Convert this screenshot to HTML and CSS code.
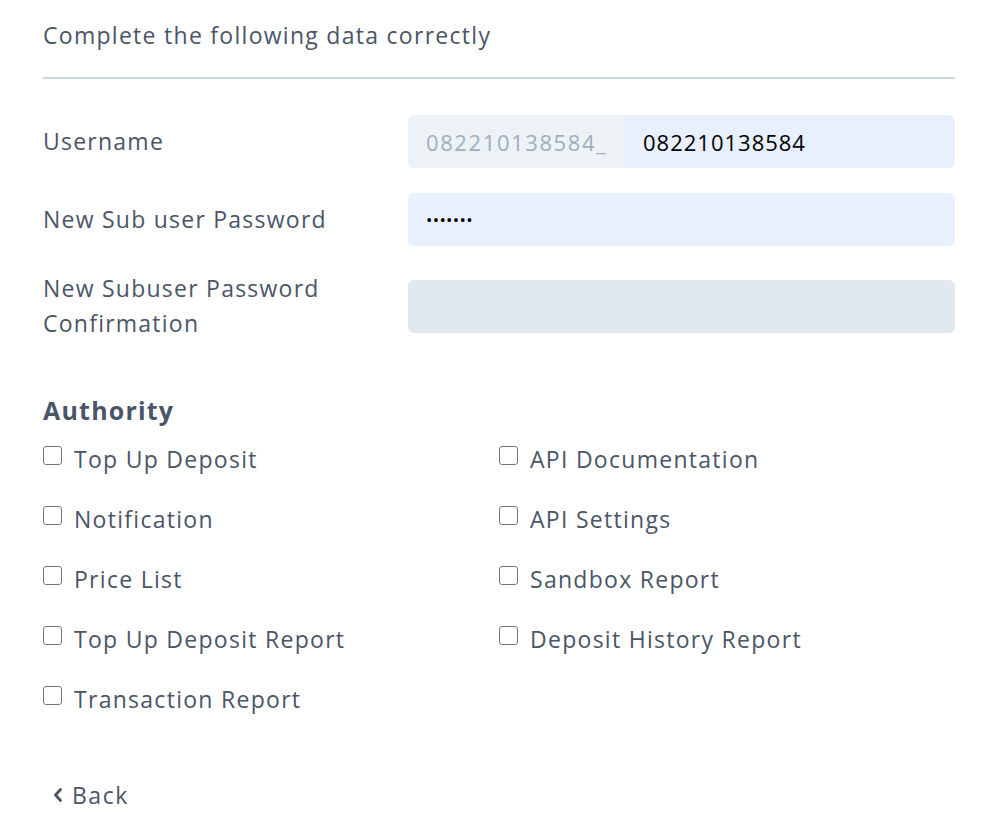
FILE: index.html
```html
<!DOCTYPE html>
<html>
<head>
<meta charset="utf-8">
<link rel="stylesheet" href="styles.css">
</head>
<body>
<div class="page">
  <div class="title">Complete the following data correctly</div>
  <div class="divider"></div>
  <div class="form">
    <div class="row">
      <div class="label">Username</div>
      <div class="input split">
        <div class="prefix">082210138584_</div>
        <div class="value">082210138584</div>
      </div>
    </div>
    <div class="row">
      <div class="label">New Sub user Password</div>
      <div class="input filled"><span class="dots">•••••••</span></div>
    </div>
    <div class="row">
      <div class="label">New Subuser Password<br>Confirmation</div>
      <div class="input empty"></div>
    </div>
  </div>
  <div class="authority">Authority</div>
  <div class="checks">
    <label class="check"><span class="box"></span>Top Up Deposit</label>
    <label class="check"><span class="box"></span>API Documentation</label>
    <label class="check"><span class="box"></span>Notification</label>
    <label class="check"><span class="box"></span>API Settings</label>
    <label class="check"><span class="box"></span>Price List</label>
    <label class="check"><span class="box"></span>Sandbox Report</label>
    <label class="check"><span class="box"></span>Top Up Deposit Report</label>
    <label class="check"><span class="box"></span>Deposit History Report</label>
    <label class="check"><span class="box"></span>Transaction Report</label>
  </div>
  <div class="back">
    <svg class="chev" width="12" height="18" viewBox="0 0 12 18"><path d="M8.5 3.5 L3.5 9 L8.5 14.5" fill="none" stroke="#4a5568" stroke-width="2.8" stroke-linecap="round" stroke-linejoin="round"/></svg>
    <span>Back</span>
  </div>
</div>
</body>
</html>
```
FILE: styles.css
```css
html, body {
  margin: 0;
  padding: 0;
  background: #ffffff;
}
body {
  font-family: "Open Sans", "Noto Sans", sans-serif;
  color: #4a5568;
}
.page {
  padding: 0 40px 0 43px;
}
.title {
  font-size: 23px;
  letter-spacing: 1.28px;
  line-height: 28px;
  padding-top: 21px;
}
.divider {
  height: 2px;
  background: #cbd5e0;
  margin-top: 28px;
}
.form {
  padding-top: 36px;
  display: flex;
  flex-direction: column;
  gap: 25px;
}
.row {
  display: grid;
  grid-template-columns: 365px 1fr;
  align-items: center;
}
.label {
  font-size: 23px;
  letter-spacing: 1.24px;
  line-height: 35px;
}
.input {
  height: 53px;
  border-radius: 6px;
  box-sizing: border-box;
  display: flex;
  align-items: center;
  font-size: 22px;
  letter-spacing: 1px;
}
.split {
  overflow: hidden;
  background: #e8f0fe;
}
.prefix {
  background: #edf2f7;
  color: #a0aec0;
  width: 217px;
  height: 100%;
  display: flex;
  align-items: center;
  padding-left: 18px;
  box-sizing: border-box;
  letter-spacing: 1.6px;
}
.value {
  color: #000;
  padding-left: 18px;
}
.filled {
  background: #e8f0fe;
  padding-left: 18px;
  color: #000;
}
.dots {
  font-size: 17px;
  letter-spacing: 0.3px;
}
.empty {
  background: #e2e8f0;
}
.authority {
  font-size: 25px;
  font-weight: 700;
  letter-spacing: 1.2px;
  margin-top: 53px;
  line-height: 32px;
}
.checks {
  margin-top: 17px;
  display: grid;
  grid-template-columns: 456px 1fr;
  row-gap: 28px;
}
.check {
  display: flex;
  align-items: center;
  font-size: 23px;
  letter-spacing: 1.28px;
  line-height: 32px;
}
.box {
  width: 17px;
  height: 17px;
  border: 1px solid #767676;
  border-radius: 3px;
  margin-right: 12px;
  background: #fff;
  flex: none;
  position: relative;
  top: -4px;
}
.back {
  margin-top: 64px;
  margin-left: 9px;
  display: flex;
  align-items: center;
  gap: 8px;
  font-size: 23px;
  letter-spacing: 1.5px;
  line-height: 32px;
}
.chev {
  flex: none;
}
```
